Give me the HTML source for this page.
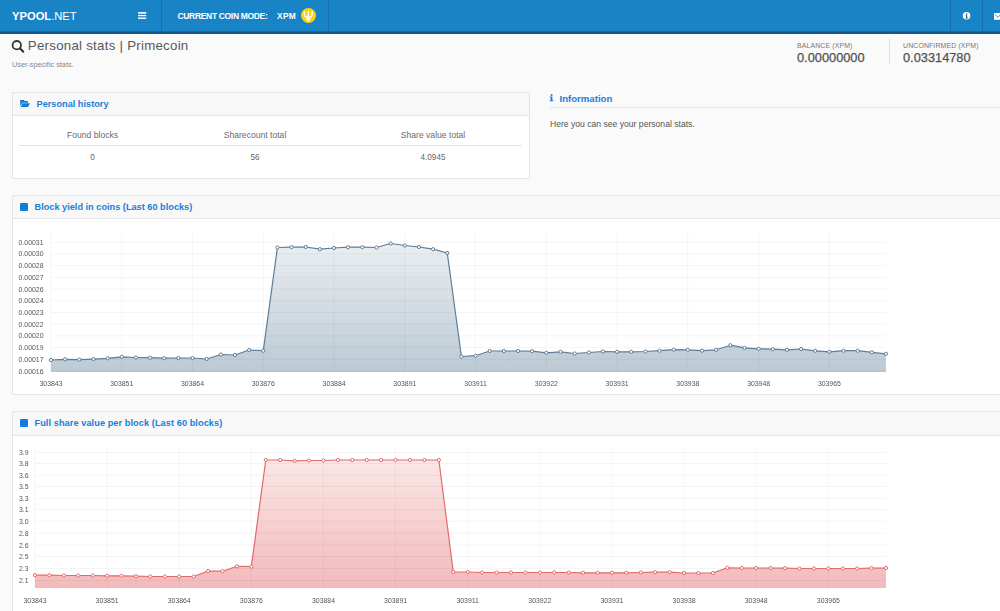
<!DOCTYPE html>
<html><head><meta charset="utf-8">
<style>
*{margin:0;padding:0;box-sizing:border-box}
html,body{width:1000px;height:611px;overflow:hidden;background:#fafafa;font-family:"Liberation Sans",sans-serif;color:#555}
.a{position:absolute;white-space:nowrap}
#nav{position:absolute;left:0;top:0;width:1000px;height:34px;background:linear-gradient(#1884c6 0,#1884c6 31px,#176aa0 31px,#176aa0 32px,#13568a 32px,#13568a 33px,#15598c 33px)}
#navline{position:absolute;left:0;top:34px;width:1000px;height:1px;background:#fff}
.sep{position:absolute;top:0;width:1px;height:31px;background:#1670ab}
.logo{left:12px;top:10px;font-size:11.2px;color:#fff;letter-spacing:0px}
.logo b{font-weight:bold}
.mode{left:177.5px;top:10.6px;font-size:8.5px;font-weight:bold;color:#fff;letter-spacing:-0.33px}
.xpm{left:277px;top:11px;font-size:8.4px;font-weight:bold;color:#fff;letter-spacing:0.3px}
.coin{position:absolute;left:301px;top:8px;width:15px;height:15px;border-radius:50%;background:#f9d20e}
.title{left:27.8px;top:38.4px;font-size:13.3px;color:#585858;letter-spacing:0.25px}
.sub{left:12px;top:60px;font-size:7.3px;color:#888}
.ballab{top:41.5px;font-size:6.9px;color:#777;letter-spacing:0.15px}
.balval{top:49.5px;font-size:12.8px;color:#505050;-webkit-text-stroke:0.25px #505050}
.panel{position:absolute;background:#fff;border:1px solid #e5e5e5}
.ph{position:absolute;left:0;top:0;right:0;background:#f8f8f8;border-bottom:1px solid #e5e5e5}
.pt{font-size:9.2px;font-weight:bold;color:#1a7fd7}
.sq{position:absolute;width:8px;height:8px;background:#127edb;border-radius:1px}
.th{top:129.7px;font-size:8.6px;color:#6b6b6b;text-align:center}
.td{top:153px;font-size:8.2px;color:#666;text-align:center}
svg text.yl{font-family:"Liberation Sans",sans-serif;font-size:6.9px;fill:#555}
</style></head><body>
<div id="nav"></div>
<div id="navline"></div>
<div class="sep" style="left:161px"></div>
<div class="sep" style="left:328px"></div>
<div class="sep" style="left:950px"></div>
<div class="sep" style="left:982px"></div>
<div class="a logo"><b>YPOOL</b>.NET</div>
<svg class="a" style="left:138px;top:12px" width="9" height="8" viewBox="0 0 9 8"><rect x="0" y="0.1" width="8.2" height="1.6" fill="#fff"/><rect x="0" y="2.9" width="8.2" height="1.3" fill="#fff"/><rect x="0" y="5.5" width="8.2" height="1.4" fill="#fff"/></svg>
<div class="a mode">CURRENT COIN MODE:</div>
<div class="a xpm">XPM</div>
<div class="coin"></div>
<svg class="a" style="left:301px;top:8px" width="15" height="15" viewBox="0 0 15 15"><path d="M3.4 3.2V6.4Q3.4 9.2 7.3 9.2Q11.2 9.2 11.2 6.4V3.2M7.3 3.1V13.8M5.1 11.2H9.5" stroke="#fff" stroke-width="1.4" fill="none"/></svg>
<svg class="a" style="left:962px;top:11px" width="10" height="10" viewBox="0 0 10 10"><circle cx="4.55" cy="4.85" r="3.75" fill="#fff"/><path d="M3.6 4.2H5.2V6.7H5.8V7.4H3.6V6.7H4.1V4.9H3.6Z" fill="#1a4a70"/><circle cx="4.6" cy="2.9" r="0.75" fill="#1a4a70"/></svg>
<svg class="a" style="left:994px;top:13px" width="8" height="8" viewBox="0 0 8 8"><rect x="0" y="0" width="10" height="6.8" fill="#fff"/><path d="M0.6 1L3.8 4.2L7 1.2" stroke="#6a5a8a" stroke-width="0.8" fill="none"/></svg>

<svg class="a" style="left:10px;top:39.2px" width="16" height="16" viewBox="0 0 16 16"><circle cx="6.8" cy="6.2" r="4.2" stroke="#383838" stroke-width="1.8" fill="none"/><path d="M9.8 9.3L13.3 12.8" stroke="#333" stroke-width="2" stroke-linecap="round"/></svg>
<div class="a title">Personal stats | Primecoin</div>
<div class="a sub">User-specific stats.</div>
<div class="a ballab" style="left:797px">BALANCE (XPM)</div>
<div class="a balval" style="left:797px">0.00000000</div>
<div class="a" style="left:889px;top:39px;width:1px;height:25px;background:#ddd"></div>
<div class="a ballab" style="left:903px">UNCONFIRMED (XPM)</div>
<div class="a balval" style="left:903px">0.03314780</div>

<div class="panel" style="left:12px;top:92px;width:518px;height:87px">
  <div class="ph" style="height:23px"></div>
</div>
<svg class="a" style="left:20px;top:100px" width="11" height="8" viewBox="0 0 11 8"><path d="M0.2 0H4L4.6 1.1H8V2.7H2.3L0.2 6.6Z" fill="#127edb"/><path d="M2.5 3.3H10L8 7.1H0.7Z" fill="#127edb"/></svg>
<div class="a pt" style="left:36.5px;top:99px">Personal history</div>
<div class="a th" style="left:19px;width:147px">Found blocks</div>
<div class="a th" style="left:166px;width:178px">Sharecount total</div>
<div class="a th" style="left:344px;width:178px">Share value total</div>
<div class="a" style="left:19px;top:145px;width:503px;height:1px;background:#e3e3e3"></div>
<div class="a td" style="left:19px;width:147px">0</div>
<div class="a td" style="left:166px;width:178px">56</div>
<div class="a td" style="left:344px;width:178px">4.0945</div>

<svg class="a" style="left:549px;top:94px" width="6" height="8" viewBox="0 0 6 8"><circle cx="2.6" cy="1" r="1" fill="#1a7dd4"/><path d="M0.8 2.6H3.4V6.2H4.2V7.2H0.8V6.2H1.6V3.6H0.8Z" fill="#1a7dd4"/></svg>
<div class="a pt" style="left:559.5px;top:92.5px;font-size:9.6px">Information</div>
<div class="a" style="left:550px;top:107px;width:450px;height:1px;background:#e6e6e6"></div>
<div class="a" style="left:550px;top:119px;font-size:8.6px;color:#555">Here you can see your personal stats.</div>

<div class="panel" style="left:12px;top:195px;width:1000px;height:200px">
  <div class="ph" style="height:23px"></div>
</div>
<div class="sq" style="left:20px;top:203px"></div>
<div class="a pt" style="left:34.5px;top:201.5px">Block yield in coins (Last 60 blocks)</div>

<div class="panel" style="left:12px;top:411px;width:1000px;height:220px">
  <div class="ph" style="height:24px"></div>
</div>
<div class="sq" style="left:20px;top:419px"></div>
<div class="a pt" style="left:34.5px;top:417.5px;letter-spacing:0.07px">Full share value per block (Last 60 blocks)</div>

<svg class="a" style="left:0;top:0;will-change:transform" width="1000" height="611" viewBox="0 0 1000 611">
<defs><linearGradient id="g1" x1="0" y1="0" x2="0" y2="1" gradientUnits="objectBoundingBox"><stop offset="0" stop-color="#eaeef1"/><stop offset="1" stop-color="#bccad4"/></linearGradient></defs>
<polygon points="51.00,372 51.00,360.00 65.15,359.30 79.31,359.60 93.46,359.10 107.61,358.30 121.76,356.80 135.92,357.50 150.07,357.70 164.22,358.20 178.37,358.00 192.53,358.00 206.68,359.00 220.83,354.50 234.98,355.00 249.14,350.00 263.29,350.70 277.44,247.50 291.59,247.20 305.75,247.00 319.90,249.20 334.05,248.00 348.20,247.20 362.36,247.20 376.51,247.50 390.66,243.50 404.81,245.50 418.97,247.00 433.12,249.20 447.27,253.00 461.42,356.50 475.58,355.70 489.73,351.00 503.88,351.00 518.03,351.00 532.19,351.20 546.34,352.80 560.49,351.80 574.64,353.50 588.80,352.50 602.95,351.50 617.10,351.80 631.25,351.80 645.41,351.50 659.56,350.70 673.71,349.70 687.86,349.80 702.02,350.70 716.17,349.80 730.32,345.20 744.47,347.80 758.63,348.80 772.78,349.20 786.93,349.80 801.08,349.00 815.24,350.80 829.39,351.80 843.54,350.70 857.69,350.70 871.85,352.30 886.00,353.80 886.00,372" fill="url(#g1)"/>
<path d="M51 242.20H886 M51 253.91H886 M51 265.62H886 M51 277.33H886 M51 289.04H886 M51 300.75H886 M51 312.46H886 M51 324.17H886 M51 335.88H886 M51 347.59H886 M51 359.30H886 M51 371.01H886 M51.00 232V372 M121.76 232V372 M192.53 232V372 M263.29 232V372 M334.05 232V372 M404.81 232V372 M475.58 232V372 M546.34 232V372 M617.10 232V372 M687.86 232V372 M758.63 232V372 M829.39 232V372" stroke="rgba(0,0,0,0.045)" stroke-width="1" fill="none"/>
<polyline points="51.00,360.00 65.15,359.30 79.31,359.60 93.46,359.10 107.61,358.30 121.76,356.80 135.92,357.50 150.07,357.70 164.22,358.20 178.37,358.00 192.53,358.00 206.68,359.00 220.83,354.50 234.98,355.00 249.14,350.00 263.29,350.70 277.44,247.50 291.59,247.20 305.75,247.00 319.90,249.20 334.05,248.00 348.20,247.20 362.36,247.20 376.51,247.50 390.66,243.50 404.81,245.50 418.97,247.00 433.12,249.20 447.27,253.00 461.42,356.50 475.58,355.70 489.73,351.00 503.88,351.00 518.03,351.00 532.19,351.20 546.34,352.80 560.49,351.80 574.64,353.50 588.80,352.50 602.95,351.50 617.10,351.80 631.25,351.80 645.41,351.50 659.56,350.70 673.71,349.70 687.86,349.80 702.02,350.70 716.17,349.80 730.32,345.20 744.47,347.80 758.63,348.80 772.78,349.20 786.93,349.80 801.08,349.00 815.24,350.80 829.39,351.80 843.54,350.70 857.69,350.70 871.85,352.30 886.00,353.80" fill="none" stroke="#5f7c98" stroke-width="1.2" stroke-linejoin="round"/>
<circle cx="51.00" cy="360.00" r="1.6" fill="#fff" stroke="#5f7c98" stroke-width="1"/>
<circle cx="65.15" cy="359.30" r="1.6" fill="#fff" stroke="#5f7c98" stroke-width="1"/>
<circle cx="79.31" cy="359.60" r="1.6" fill="#fff" stroke="#5f7c98" stroke-width="1"/>
<circle cx="93.46" cy="359.10" r="1.6" fill="#fff" stroke="#5f7c98" stroke-width="1"/>
<circle cx="107.61" cy="358.30" r="1.6" fill="#fff" stroke="#5f7c98" stroke-width="1"/>
<circle cx="121.76" cy="356.80" r="1.6" fill="#fff" stroke="#5f7c98" stroke-width="1"/>
<circle cx="135.92" cy="357.50" r="1.6" fill="#fff" stroke="#5f7c98" stroke-width="1"/>
<circle cx="150.07" cy="357.70" r="1.6" fill="#fff" stroke="#5f7c98" stroke-width="1"/>
<circle cx="164.22" cy="358.20" r="1.6" fill="#fff" stroke="#5f7c98" stroke-width="1"/>
<circle cx="178.37" cy="358.00" r="1.6" fill="#fff" stroke="#5f7c98" stroke-width="1"/>
<circle cx="192.53" cy="358.00" r="1.6" fill="#fff" stroke="#5f7c98" stroke-width="1"/>
<circle cx="206.68" cy="359.00" r="1.6" fill="#fff" stroke="#5f7c98" stroke-width="1"/>
<circle cx="220.83" cy="354.50" r="1.6" fill="#fff" stroke="#5f7c98" stroke-width="1"/>
<circle cx="234.98" cy="355.00" r="1.6" fill="#fff" stroke="#5f7c98" stroke-width="1"/>
<circle cx="249.14" cy="350.00" r="1.6" fill="#fff" stroke="#5f7c98" stroke-width="1"/>
<circle cx="263.29" cy="350.70" r="1.6" fill="#fff" stroke="#5f7c98" stroke-width="1"/>
<circle cx="277.44" cy="247.50" r="1.6" fill="#fff" stroke="#5f7c98" stroke-width="1"/>
<circle cx="291.59" cy="247.20" r="1.6" fill="#fff" stroke="#5f7c98" stroke-width="1"/>
<circle cx="305.75" cy="247.00" r="1.6" fill="#fff" stroke="#5f7c98" stroke-width="1"/>
<circle cx="319.90" cy="249.20" r="1.6" fill="#fff" stroke="#5f7c98" stroke-width="1"/>
<circle cx="334.05" cy="248.00" r="1.6" fill="#fff" stroke="#5f7c98" stroke-width="1"/>
<circle cx="348.20" cy="247.20" r="1.6" fill="#fff" stroke="#5f7c98" stroke-width="1"/>
<circle cx="362.36" cy="247.20" r="1.6" fill="#fff" stroke="#5f7c98" stroke-width="1"/>
<circle cx="376.51" cy="247.50" r="1.6" fill="#fff" stroke="#5f7c98" stroke-width="1"/>
<circle cx="390.66" cy="243.50" r="1.6" fill="#fff" stroke="#5f7c98" stroke-width="1"/>
<circle cx="404.81" cy="245.50" r="1.6" fill="#fff" stroke="#5f7c98" stroke-width="1"/>
<circle cx="418.97" cy="247.00" r="1.6" fill="#fff" stroke="#5f7c98" stroke-width="1"/>
<circle cx="433.12" cy="249.20" r="1.6" fill="#fff" stroke="#5f7c98" stroke-width="1"/>
<circle cx="447.27" cy="253.00" r="1.6" fill="#fff" stroke="#5f7c98" stroke-width="1"/>
<circle cx="461.42" cy="356.50" r="1.6" fill="#fff" stroke="#5f7c98" stroke-width="1"/>
<circle cx="475.58" cy="355.70" r="1.6" fill="#fff" stroke="#5f7c98" stroke-width="1"/>
<circle cx="489.73" cy="351.00" r="1.6" fill="#fff" stroke="#5f7c98" stroke-width="1"/>
<circle cx="503.88" cy="351.00" r="1.6" fill="#fff" stroke="#5f7c98" stroke-width="1"/>
<circle cx="518.03" cy="351.00" r="1.6" fill="#fff" stroke="#5f7c98" stroke-width="1"/>
<circle cx="532.19" cy="351.20" r="1.6" fill="#fff" stroke="#5f7c98" stroke-width="1"/>
<circle cx="546.34" cy="352.80" r="1.6" fill="#fff" stroke="#5f7c98" stroke-width="1"/>
<circle cx="560.49" cy="351.80" r="1.6" fill="#fff" stroke="#5f7c98" stroke-width="1"/>
<circle cx="574.64" cy="353.50" r="1.6" fill="#fff" stroke="#5f7c98" stroke-width="1"/>
<circle cx="588.80" cy="352.50" r="1.6" fill="#fff" stroke="#5f7c98" stroke-width="1"/>
<circle cx="602.95" cy="351.50" r="1.6" fill="#fff" stroke="#5f7c98" stroke-width="1"/>
<circle cx="617.10" cy="351.80" r="1.6" fill="#fff" stroke="#5f7c98" stroke-width="1"/>
<circle cx="631.25" cy="351.80" r="1.6" fill="#fff" stroke="#5f7c98" stroke-width="1"/>
<circle cx="645.41" cy="351.50" r="1.6" fill="#fff" stroke="#5f7c98" stroke-width="1"/>
<circle cx="659.56" cy="350.70" r="1.6" fill="#fff" stroke="#5f7c98" stroke-width="1"/>
<circle cx="673.71" cy="349.70" r="1.6" fill="#fff" stroke="#5f7c98" stroke-width="1"/>
<circle cx="687.86" cy="349.80" r="1.6" fill="#fff" stroke="#5f7c98" stroke-width="1"/>
<circle cx="702.02" cy="350.70" r="1.6" fill="#fff" stroke="#5f7c98" stroke-width="1"/>
<circle cx="716.17" cy="349.80" r="1.6" fill="#fff" stroke="#5f7c98" stroke-width="1"/>
<circle cx="730.32" cy="345.20" r="1.6" fill="#fff" stroke="#5f7c98" stroke-width="1"/>
<circle cx="744.47" cy="347.80" r="1.6" fill="#fff" stroke="#5f7c98" stroke-width="1"/>
<circle cx="758.63" cy="348.80" r="1.6" fill="#fff" stroke="#5f7c98" stroke-width="1"/>
<circle cx="772.78" cy="349.20" r="1.6" fill="#fff" stroke="#5f7c98" stroke-width="1"/>
<circle cx="786.93" cy="349.80" r="1.6" fill="#fff" stroke="#5f7c98" stroke-width="1"/>
<circle cx="801.08" cy="349.00" r="1.6" fill="#fff" stroke="#5f7c98" stroke-width="1"/>
<circle cx="815.24" cy="350.80" r="1.6" fill="#fff" stroke="#5f7c98" stroke-width="1"/>
<circle cx="829.39" cy="351.80" r="1.6" fill="#fff" stroke="#5f7c98" stroke-width="1"/>
<circle cx="843.54" cy="350.70" r="1.6" fill="#fff" stroke="#5f7c98" stroke-width="1"/>
<circle cx="857.69" cy="350.70" r="1.6" fill="#fff" stroke="#5f7c98" stroke-width="1"/>
<circle cx="871.85" cy="352.30" r="1.6" fill="#fff" stroke="#5f7c98" stroke-width="1"/>
<circle cx="886.00" cy="353.80" r="1.6" fill="#fff" stroke="#5f7c98" stroke-width="1"/>
<text x="43.5" y="244.70" text-anchor="end" class="yl">0.00031</text>
<text x="43.5" y="256.41" text-anchor="end" class="yl">0.00030</text>
<text x="43.5" y="268.12" text-anchor="end" class="yl">0.00028</text>
<text x="43.5" y="279.83" text-anchor="end" class="yl">0.00027</text>
<text x="43.5" y="291.54" text-anchor="end" class="yl">0.00026</text>
<text x="43.5" y="303.25" text-anchor="end" class="yl">0.00024</text>
<text x="43.5" y="314.96" text-anchor="end" class="yl">0.00023</text>
<text x="43.5" y="326.67" text-anchor="end" class="yl">0.00022</text>
<text x="43.5" y="338.38" text-anchor="end" class="yl">0.00020</text>
<text x="43.5" y="350.09" text-anchor="end" class="yl">0.00019</text>
<text x="43.5" y="361.80" text-anchor="end" class="yl">0.00017</text>
<text x="43.5" y="373.51" text-anchor="end" class="yl">0.00016</text>
<text x="51.00" y="385.8" text-anchor="middle" class="yl">303843</text>
<text x="121.76" y="385.8" text-anchor="middle" class="yl">303851</text>
<text x="192.53" y="385.8" text-anchor="middle" class="yl">303864</text>
<text x="263.29" y="385.8" text-anchor="middle" class="yl">303876</text>
<text x="334.05" y="385.8" text-anchor="middle" class="yl">303884</text>
<text x="404.81" y="385.8" text-anchor="middle" class="yl">303891</text>
<text x="475.58" y="385.8" text-anchor="middle" class="yl">303911</text>
<text x="546.34" y="385.8" text-anchor="middle" class="yl">303922</text>
<text x="617.10" y="385.8" text-anchor="middle" class="yl">303931</text>
<text x="687.86" y="385.8" text-anchor="middle" class="yl">303938</text>
<text x="758.63" y="385.8" text-anchor="middle" class="yl">303948</text>
<text x="829.39" y="385.8" text-anchor="middle" class="yl">303965</text>
<defs><linearGradient id="g2" x1="0" y1="0" x2="0" y2="1" gradientUnits="objectBoundingBox"><stop offset="0" stop-color="#fbe6e6"/><stop offset="1" stop-color="#f2babb"/></linearGradient></defs>
<polygon points="35.00,588 35.00,575.20 49.42,575.20 63.85,575.50 78.27,575.50 92.69,575.50 107.12,575.80 121.54,575.80 135.97,576.20 150.39,576.50 164.81,576.50 179.24,576.50 193.66,576.50 208.08,571.00 222.51,571.20 236.93,566.30 251.36,566.50 265.78,460.00 280.20,460.00 294.63,460.80 309.05,460.50 323.47,460.50 337.90,460.00 352.32,460.00 366.75,460.00 381.17,460.00 395.59,460.00 410.02,460.00 424.44,460.00 438.86,460.00 453.29,572.00 467.71,572.00 482.14,572.50 496.56,572.50 510.98,572.50 525.41,572.50 539.83,572.50 554.25,572.50 568.68,572.50 583.10,572.80 597.53,572.80 611.95,572.80 626.37,572.80 640.80,572.50 655.22,572.20 669.64,572.20 684.07,573.00 698.49,573.00 712.92,573.00 727.34,567.80 741.76,568.00 756.19,568.00 770.61,568.00 785.03,568.20 799.46,568.50 813.88,568.50 828.31,568.50 842.73,568.50 857.15,568.50 871.58,568.20 886.00,568.00 886.00,588" fill="url(#g2)"/>
<path d="M35 452.50H886 M35 463.50H886 M35 475.30H886 M35 486.50H886 M35 498.30H886 M35 509.50H886 M35 521.30H886 M35 533.30H886 M35 545.00H886 M35 556.50H886 M35 568.50H886 M35 580.50H886 M35.00 448.5V588 M107.12 448.5V588 M179.24 448.5V588 M251.36 448.5V588 M323.47 448.5V588 M395.59 448.5V588 M467.71 448.5V588 M539.83 448.5V588 M611.95 448.5V588 M684.07 448.5V588 M756.19 448.5V588 M828.31 448.5V588" stroke="rgba(0,0,0,0.045)" stroke-width="1" fill="none"/>
<polyline points="35.00,575.20 49.42,575.20 63.85,575.50 78.27,575.50 92.69,575.50 107.12,575.80 121.54,575.80 135.97,576.20 150.39,576.50 164.81,576.50 179.24,576.50 193.66,576.50 208.08,571.00 222.51,571.20 236.93,566.30 251.36,566.50 265.78,460.00 280.20,460.00 294.63,460.80 309.05,460.50 323.47,460.50 337.90,460.00 352.32,460.00 366.75,460.00 381.17,460.00 395.59,460.00 410.02,460.00 424.44,460.00 438.86,460.00 453.29,572.00 467.71,572.00 482.14,572.50 496.56,572.50 510.98,572.50 525.41,572.50 539.83,572.50 554.25,572.50 568.68,572.50 583.10,572.80 597.53,572.80 611.95,572.80 626.37,572.80 640.80,572.50 655.22,572.20 669.64,572.20 684.07,573.00 698.49,573.00 712.92,573.00 727.34,567.80 741.76,568.00 756.19,568.00 770.61,568.00 785.03,568.20 799.46,568.50 813.88,568.50 828.31,568.50 842.73,568.50 857.15,568.50 871.58,568.20 886.00,568.00" fill="none" stroke="#e4696c" stroke-width="1.2" stroke-linejoin="round"/>
<circle cx="35.00" cy="575.20" r="1.6" fill="#fff" stroke="#e4696c" stroke-width="1"/>
<circle cx="49.42" cy="575.20" r="1.6" fill="#fff" stroke="#e4696c" stroke-width="1"/>
<circle cx="63.85" cy="575.50" r="1.6" fill="#fff" stroke="#e4696c" stroke-width="1"/>
<circle cx="78.27" cy="575.50" r="1.6" fill="#fff" stroke="#e4696c" stroke-width="1"/>
<circle cx="92.69" cy="575.50" r="1.6" fill="#fff" stroke="#e4696c" stroke-width="1"/>
<circle cx="107.12" cy="575.80" r="1.6" fill="#fff" stroke="#e4696c" stroke-width="1"/>
<circle cx="121.54" cy="575.80" r="1.6" fill="#fff" stroke="#e4696c" stroke-width="1"/>
<circle cx="135.97" cy="576.20" r="1.6" fill="#fff" stroke="#e4696c" stroke-width="1"/>
<circle cx="150.39" cy="576.50" r="1.6" fill="#fff" stroke="#e4696c" stroke-width="1"/>
<circle cx="164.81" cy="576.50" r="1.6" fill="#fff" stroke="#e4696c" stroke-width="1"/>
<circle cx="179.24" cy="576.50" r="1.6" fill="#fff" stroke="#e4696c" stroke-width="1"/>
<circle cx="193.66" cy="576.50" r="1.6" fill="#fff" stroke="#e4696c" stroke-width="1"/>
<circle cx="208.08" cy="571.00" r="1.6" fill="#fff" stroke="#e4696c" stroke-width="1"/>
<circle cx="222.51" cy="571.20" r="1.6" fill="#fff" stroke="#e4696c" stroke-width="1"/>
<circle cx="236.93" cy="566.30" r="1.6" fill="#fff" stroke="#e4696c" stroke-width="1"/>
<circle cx="251.36" cy="566.50" r="1.6" fill="#fff" stroke="#e4696c" stroke-width="1"/>
<circle cx="265.78" cy="460.00" r="1.6" fill="#fff" stroke="#e4696c" stroke-width="1"/>
<circle cx="280.20" cy="460.00" r="1.6" fill="#fff" stroke="#e4696c" stroke-width="1"/>
<circle cx="294.63" cy="460.80" r="1.6" fill="#fff" stroke="#e4696c" stroke-width="1"/>
<circle cx="309.05" cy="460.50" r="1.6" fill="#fff" stroke="#e4696c" stroke-width="1"/>
<circle cx="323.47" cy="460.50" r="1.6" fill="#fff" stroke="#e4696c" stroke-width="1"/>
<circle cx="337.90" cy="460.00" r="1.6" fill="#fff" stroke="#e4696c" stroke-width="1"/>
<circle cx="352.32" cy="460.00" r="1.6" fill="#fff" stroke="#e4696c" stroke-width="1"/>
<circle cx="366.75" cy="460.00" r="1.6" fill="#fff" stroke="#e4696c" stroke-width="1"/>
<circle cx="381.17" cy="460.00" r="1.6" fill="#fff" stroke="#e4696c" stroke-width="1"/>
<circle cx="395.59" cy="460.00" r="1.6" fill="#fff" stroke="#e4696c" stroke-width="1"/>
<circle cx="410.02" cy="460.00" r="1.6" fill="#fff" stroke="#e4696c" stroke-width="1"/>
<circle cx="424.44" cy="460.00" r="1.6" fill="#fff" stroke="#e4696c" stroke-width="1"/>
<circle cx="438.86" cy="460.00" r="1.6" fill="#fff" stroke="#e4696c" stroke-width="1"/>
<circle cx="453.29" cy="572.00" r="1.6" fill="#fff" stroke="#e4696c" stroke-width="1"/>
<circle cx="467.71" cy="572.00" r="1.6" fill="#fff" stroke="#e4696c" stroke-width="1"/>
<circle cx="482.14" cy="572.50" r="1.6" fill="#fff" stroke="#e4696c" stroke-width="1"/>
<circle cx="496.56" cy="572.50" r="1.6" fill="#fff" stroke="#e4696c" stroke-width="1"/>
<circle cx="510.98" cy="572.50" r="1.6" fill="#fff" stroke="#e4696c" stroke-width="1"/>
<circle cx="525.41" cy="572.50" r="1.6" fill="#fff" stroke="#e4696c" stroke-width="1"/>
<circle cx="539.83" cy="572.50" r="1.6" fill="#fff" stroke="#e4696c" stroke-width="1"/>
<circle cx="554.25" cy="572.50" r="1.6" fill="#fff" stroke="#e4696c" stroke-width="1"/>
<circle cx="568.68" cy="572.50" r="1.6" fill="#fff" stroke="#e4696c" stroke-width="1"/>
<circle cx="583.10" cy="572.80" r="1.6" fill="#fff" stroke="#e4696c" stroke-width="1"/>
<circle cx="597.53" cy="572.80" r="1.6" fill="#fff" stroke="#e4696c" stroke-width="1"/>
<circle cx="611.95" cy="572.80" r="1.6" fill="#fff" stroke="#e4696c" stroke-width="1"/>
<circle cx="626.37" cy="572.80" r="1.6" fill="#fff" stroke="#e4696c" stroke-width="1"/>
<circle cx="640.80" cy="572.50" r="1.6" fill="#fff" stroke="#e4696c" stroke-width="1"/>
<circle cx="655.22" cy="572.20" r="1.6" fill="#fff" stroke="#e4696c" stroke-width="1"/>
<circle cx="669.64" cy="572.20" r="1.6" fill="#fff" stroke="#e4696c" stroke-width="1"/>
<circle cx="684.07" cy="573.00" r="1.6" fill="#fff" stroke="#e4696c" stroke-width="1"/>
<circle cx="698.49" cy="573.00" r="1.6" fill="#fff" stroke="#e4696c" stroke-width="1"/>
<circle cx="712.92" cy="573.00" r="1.6" fill="#fff" stroke="#e4696c" stroke-width="1"/>
<circle cx="727.34" cy="567.80" r="1.6" fill="#fff" stroke="#e4696c" stroke-width="1"/>
<circle cx="741.76" cy="568.00" r="1.6" fill="#fff" stroke="#e4696c" stroke-width="1"/>
<circle cx="756.19" cy="568.00" r="1.6" fill="#fff" stroke="#e4696c" stroke-width="1"/>
<circle cx="770.61" cy="568.00" r="1.6" fill="#fff" stroke="#e4696c" stroke-width="1"/>
<circle cx="785.03" cy="568.20" r="1.6" fill="#fff" stroke="#e4696c" stroke-width="1"/>
<circle cx="799.46" cy="568.50" r="1.6" fill="#fff" stroke="#e4696c" stroke-width="1"/>
<circle cx="813.88" cy="568.50" r="1.6" fill="#fff" stroke="#e4696c" stroke-width="1"/>
<circle cx="828.31" cy="568.50" r="1.6" fill="#fff" stroke="#e4696c" stroke-width="1"/>
<circle cx="842.73" cy="568.50" r="1.6" fill="#fff" stroke="#e4696c" stroke-width="1"/>
<circle cx="857.15" cy="568.50" r="1.6" fill="#fff" stroke="#e4696c" stroke-width="1"/>
<circle cx="871.58" cy="568.20" r="1.6" fill="#fff" stroke="#e4696c" stroke-width="1"/>
<circle cx="886.00" cy="568.00" r="1.6" fill="#fff" stroke="#e4696c" stroke-width="1"/>
<text x="28.5" y="455.00" text-anchor="end" class="yl">3.9</text>
<text x="28.5" y="466.00" text-anchor="end" class="yl">3.8</text>
<text x="28.5" y="477.80" text-anchor="end" class="yl">3.6</text>
<text x="28.5" y="489.00" text-anchor="end" class="yl">3.5</text>
<text x="28.5" y="500.80" text-anchor="end" class="yl">3.3</text>
<text x="28.5" y="512.00" text-anchor="end" class="yl">3.1</text>
<text x="28.5" y="523.80" text-anchor="end" class="yl">3.0</text>
<text x="28.5" y="535.80" text-anchor="end" class="yl">2.8</text>
<text x="28.5" y="547.50" text-anchor="end" class="yl">2.6</text>
<text x="28.5" y="559.00" text-anchor="end" class="yl">2.5</text>
<text x="28.5" y="571.00" text-anchor="end" class="yl">2.3</text>
<text x="28.5" y="583.00" text-anchor="end" class="yl">2.1</text>
<text x="35.00" y="602.7" text-anchor="middle" class="yl">303843</text>
<text x="107.12" y="602.7" text-anchor="middle" class="yl">303851</text>
<text x="179.24" y="602.7" text-anchor="middle" class="yl">303864</text>
<text x="251.36" y="602.7" text-anchor="middle" class="yl">303876</text>
<text x="323.47" y="602.7" text-anchor="middle" class="yl">303884</text>
<text x="395.59" y="602.7" text-anchor="middle" class="yl">303891</text>
<text x="467.71" y="602.7" text-anchor="middle" class="yl">303911</text>
<text x="539.83" y="602.7" text-anchor="middle" class="yl">303922</text>
<text x="611.95" y="602.7" text-anchor="middle" class="yl">303931</text>
<text x="684.07" y="602.7" text-anchor="middle" class="yl">303938</text>
<text x="756.19" y="602.7" text-anchor="middle" class="yl">303948</text>
<text x="828.31" y="602.7" text-anchor="middle" class="yl">303965</text>
</svg>
</body></html>
